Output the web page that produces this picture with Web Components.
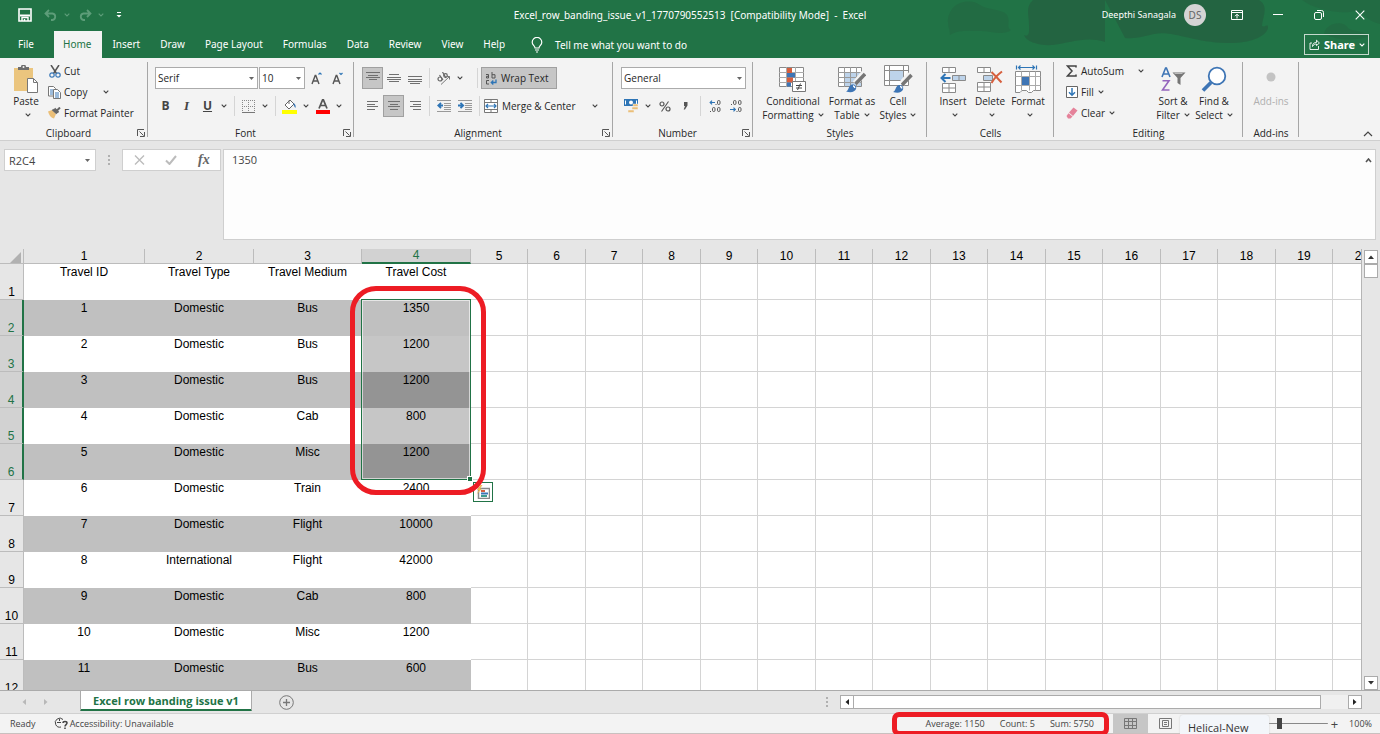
<!DOCTYPE html>
<html lang="en">
<head>
<meta charset="utf-8">
<title>Excel_row_banding_issue_v1_1770790552513 - Excel</title>
<style>
  body {
    margin: 0;
    font-family: "Open Sans", "Noto Sans", sans-serif;
    font-size: 10px;
    line-height: 14px;
    color: #262626;
  }
</style>
</head>
<body>
<excel-app></excel-app>

<script>
// Icon drawings: [width, height, svg content].
const ICONS = {
  save: [14, 14, '<path d="M1 1h12v12H1z" fill="none" stroke="#fff" stroke-width="1.6"/><path d="M2 7.500h10" stroke="#fff" stroke-width="2"/><path d="M4 13v-3.500h6V13M6.500 13v-2" fill="none" stroke="#fff" stroke-width="1.400"/>'],
  undo: [14, 12, '<path d="M5 1L1.500 4.500 5 8M2 4.500h6.500a3.300 3.300 0 0 1 0 6.500H7" fill="none" stroke="#5d9d79" stroke-width="1.800"/>'],
  redo: [14, 12, '<path d="M9 1l3.500 3.500L9 8M12 4.500H5.500a3.300 3.300 0 0 0 0 6.500H7" fill="none" stroke="#5d9d79" stroke-width="1.800"/>'],
  customize: [6, 6, '<path d="M1 .5h4" stroke="#fff"/><path d="M.5 3h5L3 5.500z" fill="#fff"/>'],
  chevron: [6, 4, '<path d="M.7.700L3 3 5.300.7" fill="none" stroke="currentColor" stroke-width="1.100"/>'],
  collapse: [10, 6, '<path d="M1 5l4-4 4 4" fill="none" stroke="#444" stroke-width="1.200"/>'],
  bulb: [12, 16, '<path d="M4 11c0-2-2.800-2.800-2.800-5.800a4.800 4.800 0 0 1 9.600 0C10.800 8.200 8 9 8 11zM4 13h4M5 15h2" fill="none" stroke="#fff" stroke-width="1.200"/>'],
  ribbonbox: [12, 10, '<path d="M.5.500h11v9H.5zM.5 2.500h11M6 8.500v-4M4 6.200l2-2 2 2" fill="none" stroke="#fff"/>'],
  minimize: [10, 2, '<path d="M0 .5h10" stroke="#fff"/>'],
  restore: [10, 10, '<rect x=".5" y="2.500" width="7" height="7" rx="1.500" fill="none" stroke="#fff"/><path d="M3 .5h4.500a2 2 0 0 1 2 2V7" fill="none" stroke="#fff"/>'],
  close: [10, 10, '<path d="M.7.700l8.600 8.600M9.300.7L.7 9.300" stroke="#fff" stroke-width="1.100"/>'],
  share: [11, 11, '<path d="M3 4H1v6.500h8.500V7M3.500 7.500c0-3 1.500-4 4-4V1.200L10.400 4 7.500 6.600V5C6 5 4.500 5.500 3.500 7.500z" fill="none" stroke="#fff" stroke-width=".9"/>'],
  paste: [25, 28, '<path d="M0 3h19v23H0z" fill="#ebc57e"/><path d="M4 5V2h3a2.500 2.500 0 0 1 5 0h3v3z" fill="#6d6d6d"/><circle cx="9.500" cy="2" r="1" fill="#f3f3f3"/><path d="M13.500 13.500h6l4 4v10h-10z" fill="#fff" stroke="#777"/><path d="M19.500 13.500v4h4" fill="none" stroke="#777"/>'],
  cut: [12, 13, '<path d="M2 0l5.500 8.500M10 0L4.500 8.500" stroke="#555" stroke-width="1.500"/><circle cx="3" cy="10" r="2.200" fill="none" stroke="#3a78b8" stroke-width="1.200"/><circle cx="9" cy="10" r="2.200" fill="none" stroke="#3a78b8" stroke-width="1.200"/>'],
  copy: [13, 13, '<path d="M.5.500h5l2 2v7.500h-7z" fill="#fff" stroke="#777"/><path d="M2 4h3M2 6h3M2 8h3" stroke="#3a78b8"/><path d="M5.500 3.500h4l3 3v6h-7z" fill="#fff" stroke="#777"/><path d="M7 7h4M7 9h4M7 11h4" stroke="#3a78b8"/>'],
  painter: [13, 12, '<path d="M0 4.500l4-1.500 4 4-2 4.500C3 11 1 8 0 4.500z" fill="#ebbf78"/><path d="M4.500 2.500l4.500 4M6.500 1.500l4 4M8 4.500L12 .5" stroke="#666" stroke-width="2"/>'],
  grow: [11, 13, '<path d="M1 12l3.200-8.500h.6L8 12M2.200 9h4.600" fill="none" stroke="#555" stroke-width="1.400"/><path d="M7.500 2.500L9 1l1.500 1.500" fill="none" stroke="#2e75b6" stroke-width="1.200"/>'],
  shrink: [11, 13, '<path d="M1 12l3.200-8.500h.6L8 12M2.200 9h4.600" fill="none" stroke="#555" stroke-width="1.400"/><path d="M7.500 1L9 2.500 10.500 1" fill="none" stroke="#2e75b6" stroke-width="1.200"/>'],
  borders: [13, 13, '<path d="M0 .5h13M.5 0v12M12.500 0v12M6.500 0v12M0 6.500h13" stroke="#888" stroke-dasharray="1 1"/><path d="M0 12.500h13" stroke="#777"/>'],
  bucket: [15, 15, '<path d="M3 6l5-5 4 4-5 5z" fill="#fff" stroke="#666"/><path d="M7 5V1.500" stroke="#666"/><path d="M11.500 4c2 1 2.500 3 2 5-1-1-1.500-2-2-3.500z" fill="#3a78b8"/><path d="M0 11h15v4H0z" fill="#ff0"/>'],
  fontcolor: [14, 15, '<path d="M3 9.500L6.600.8h.8L11 9.500M4.300 6.500h5.400" fill="none" stroke="#555" stroke-width="1.700"/><path d="M0 11h14v4H0z" fill="#f00"/>'],
  aligntop: [14, 14, '<path d="M0 1.500h14M2 4.500h10M0 6.500h14M3 8.500h8" stroke="#707070"/>'],
  alignmid: [14, 12, '<path d="M2 2.500h10M0 5.500h14M0 7.500h14M2 9.500h10" stroke="#707070"/>'],
  alignbot: [14, 12, '<path d="M0 4.500h14M0 7.500h14M0 9.500h14M2 11.500h10" stroke="#707070"/>'],
  left: [12, 12, '<path d="M0 1.500h11M0 4.500h8M0 6.500h11M0 9.500h8" stroke="#707070"/>'],
  center: [12, 12, '<path d="M0 1.500h12M2 4.500h8M0 6.500h12M2 9.500h8" stroke="#707070"/>'],
  right: [12, 12, '<path d="M1 1.500h11M4 4.500h8M1 6.500h11M4 9.500h8" stroke="#707070"/>'],
  orient: [14, 13, '<circle cx="3" cy="7" r="2" fill="none" stroke="#666" stroke-width="1.200"/><path d="M2.500 3l3.500 5M5.500 0L9 6" stroke="#666" stroke-width="1.200"/><circle cx="8.500" cy="3.500" r="1.800" fill="none" stroke="#666" stroke-width="1.200"/><path d="M4 12.500L12.500 4.500M9.500 4.500h3v3" fill="none" stroke="#777"/>'],
  outdent: [14, 12, '<path d="M0 .5h14M7 3.500h7M7 5.500h7M7 7.500h7M0 11.500h14M7 9.500h7" stroke="#999"/><path d="M6 5.500H1.500M4 2.800L1.200 5.500 4 8.200" fill="none" stroke="#2e75b6" stroke-width="1.800"/>'],
  indent: [14, 12, '<path d="M0 .5h14M7 3.500h7M7 5.500h7M7 7.500h7M0 11.500h14M7 9.500h7" stroke="#999"/><path d="M0 5.500h4.500M2.500 2.800L5.200 5.500 2.500 8.200" fill="none" stroke="#2e75b6" stroke-width="1.800"/>'],
  wrap: [12, 13, '<path d="M1 2.500h2.500V6H1.500V4.300h2M7 0v6h3V2.700H7M4 8.500H1.500V12H4" fill="none" stroke="#555"/><path d="M11 7.500v3H6.500M8.300 8.500l-2 2 2 2" fill="none" stroke="#2e75b6" stroke-width="1.300"/>'],
  merge: [14, 14, '<path d="M.5.500h13v13H.5zM7 .5v3M7 10.500v3M.5 3.500h13M.5 10.500h13" fill="#fff" stroke="#777"/><path d="M2 7h10M4 5L2 7l2 2M10 5l2 2-2 2" fill="none" stroke="#2e75b6" stroke-width="1.200"/>'],
  money: [15, 14, '<path d="M0 0h14v7H0z" fill="#2e75b6"/><circle cx="7" cy="3.500" r="2" fill="#fff"/><path d="M1.500 1.500v4M12.500 1.500v4" stroke="#fff"/><path d="M9 5h5v2.500H9zM8 8h6v2.500H8zM4 11h6v2.500H4z" fill="#ebbf78" stroke="#f3f3f3" stroke-width=".5"/>'],
  percent: [12, 11, '<circle cx="3" cy="3" r="2" fill="none" stroke="#555" stroke-width="1.200"/><circle cx="9" cy="8" r="2" fill="none" stroke="#555" stroke-width="1.200"/><path d="M9.500.5l-7 10" stroke="#555" stroke-width="1.100"/>'],
  comma: [5, 8, '<path d="M1 0h3.500v3.500L2 7.500H.7L2 4H1z" fill="#555"/>'],
  incdec: [12, 13, '<path d="M6 2.500H1.500M3 .7L1.200 2.500 3 4.300" fill="none" stroke="#2e75b6" stroke-width="1.200"/><rect x="8.500" y=".5" width="2.500" height="4" rx="1.200" fill="none" stroke="#555"/><rect x="3.500" y="7.500" width="2.500" height="4" rx="1.200" fill="none" stroke="#555"/><rect x="8.500" y="7.500" width="2.500" height="4" rx="1.200" fill="none" stroke="#555"/><path d="M1 11h1v1H1zM6.500 4h1v1h-1z" fill="#555"/>'],
  decdec: [12, 13, '<path d="M0 9.500h5M3.500 7.700l1.800 1.800-1.800 1.800" fill="none" stroke="#2e75b6" stroke-width="1.200"/><rect x="3.500" y=".5" width="2.500" height="4" rx="1.200" fill="none" stroke="#555"/><rect x="8.500" y=".5" width="2.500" height="4" rx="1.200" fill="none" stroke="#555"/><rect x="8.500" y="7.500" width="2.500" height="4" rx="1.200" fill="none" stroke="#555"/><path d="M1 4h1v1H1zM6.500 11h1v1h-1z" fill="#555"/>'],
  condfmt: [28, 27, '<path d="M.5 1.500h24v19H.5z" fill="#fff" stroke="#8a8a8a"/><path d="M0 6.500h25M0 11.500h25M0 16.500h25M7.500 1v20M16.500 1v20" stroke="#aaa"/><path d="M8 2h5v5H8z" fill="#d65f3e"/><path d="M8 7h8v4.500H8z" fill="#3e75b5"/><path d="M8 11.500h6v5H8z" fill="#d65f3e"/><path d="M8 16.500h4v4H8z" fill="#3e75b5"/><path d="M13.500 15.500h13v10h-13z" fill="#fff" stroke="#777"/><path d="M17 19.500h6M17 22h6M21.500 17.500l-3 6.500" stroke="#444"/>'],
  fmttable: [28, 27, '<path d="M.5 1.500h23v19H.5z" fill="#fff" stroke="#8a8a8a"/><path d="M7 7h16v13H7z" fill="#bdd3ea"/><path d="M0 6.500h24M0 11.500h24M0 16.500h24M6.500 1v20M12.500 1v20M18.500 1v20" stroke="#9a9a9a"/><path d="M26 7L17 17.500" stroke="#f3f3f3" stroke-width="6"/><path d="M27 8l-9.500 10" stroke="#757575" stroke-width="3.500"/><path d="M8 25.500c3-.5 2-6 6-7 3-.5 5 2 4 4.500-1 3-5 4-10 2.500z" fill="#3e75b5"/><path d="M15 20c1 0 2 1 1.500 2" fill="none" stroke="#fff" stroke-width="1.500"/>'],
  cellstyle: [29, 29, '<path d="M.5.500h24v20H.5zM.5 5.500h24M.5 15.500h24M5.500.5v20M19.500.5v20" fill="#fff" stroke="#8a8a8a"/><path d="M6 6h13v9H6z" fill="#bdd3ea"/><path d="M26 9L18 18.500" stroke="#f3f3f3" stroke-width="6"/><path d="M27.500 10l-9.500 10" stroke="#757575" stroke-width="3.500"/><path d="M9 27c3-.5 2-6 6-7 3-.5 5 2 4 4.500-1 3-5 4-10 2.500z" fill="#3e75b5"/><path d="M16 21.500c1 0 2 1 1.500 2" fill="none" stroke="#fff" stroke-width="1.500"/>'],
  insert: [26, 27, '<path d="M2.500 1.500h13v5h-13zM9 1.500v5M2.500 17.500h13v9h-13zM9 17.500v9M2.500 22h13" fill="#fff" stroke="#8a8a8a"/><path d="M12.500 9.500h13v5h-13zM19 9.500v5" fill="#bdd3ea" stroke="#8a8a8a"/><path d="M10.500 12H1.500M5.500 8L1.500 12l4 4" fill="none" stroke="#2e75b6" stroke-width="2"/>'],
  delete: [26, 27, '<path d="M.5 1.500h13v5H.5zM7 1.500v5M.5 16.500h13v9H.5zM7 16.500v9M.5 21h13" fill="#fff" stroke="#8a8a8a"/><path d="M6.500 9.500h9v5h-9z" fill="#bdd3ea" stroke="#8a8a8a"/><path d="M14.500 6c3 3 6 6 10 10.500M25 5.500c-4 3-8 7-10.500 11.500" fill="none" stroke="#d65f3e" stroke-width="2"/>'],
  format: [26, 28, '<path d="M1.500.5v4M21.500.5v4M3 2.500h17M5.500.5l-2 2 2 2M17.500.5l2 2-2 2" fill="none" stroke="#2e75b6" stroke-width="1.200"/><path d="M.5 6.500h25v19h-7l-2 2h-3l-2-2H7l-2 2H.5z" fill="#fff" stroke="#8a8a8a"/><path d="M.5 11.500h25M.5 20.500h25M6.500 6.500v19M14.500 6.500v19M20.500 6.500v19" stroke="#aaa"/><path d="M7 12h7v8H7z" fill="#3e75b5"/>'],
  sum: [11, 12, '<path d="M10 2.500V1H1.500l4.500 5-4.500 5H10V9.500" fill="none" stroke="#444" stroke-width="1.500"/>'],
  fill: [12, 12, '<path d="M.5.500h11v11H.5z" fill="#fff" stroke="#666"/><path d="M6 2v7M3 6.200L6 9.200l3-3" fill="none" stroke="#2e75b6" stroke-width="1.500"/>'],
  clear: [12, 12, '<path d="M7.500.5L11.500 3.500 7 9 3 5.500z" fill="#e5829a"/><path d="M2.500 6.200l4 3.300L4.500 11.500H2L.5 9z" fill="#e5829a"/>'],
  sort: [25, 25, '<path d="M1 10L4.600 1h.8L9 10M2.200 7h5.600" fill="none" stroke="#3e75b5" stroke-width="1.600"/><path d="M1.500 13.800H8L1.500 23h7" fill="none" stroke="#9465bd" stroke-width="1.600"/><path d="M11.500 5.500h13L19.500 11v7l-3-2v-5z" fill="#757575"/><path d="M13.500 6.500h8" stroke="#bbb"/>'],
  find: [26, 27, '<circle cx="16" cy="10" r="8.300" fill="#fff" stroke="#3e75b5" stroke-width="1.800"/><path d="M10 16.500l-8 8" stroke="#3e75b5" stroke-width="3.800"/>'],
  dot: [12, 16, '<circle cx="6" cy="6" r="4.500" fill="#c3c3c3"/>'],
  launcher: [8, 8, '<path d="M.5 7V.5H7M2.500 2.500l4 4M7.500 3v4.500H3" fill="none" stroke="#555"/>'],
  cancel: [11, 10, '<path d="M1 .5l9 9M10 .5l-9 9" stroke="#bcbcbc" stroke-width="1.400"/>'],
  enter: [12, 10, '<path d="M1 5.500L4.500 9 11 1" fill="none" stroke="#bcbcbc" stroke-width="2"/>'],
  dots: [2, 10, '<path d="M0 0h2v2H0zM0 4h2v2H0zM0 8h2v2H0z" fill="#b0b0b0"/>'],
  drop: [5, 3, '<path d="M0 0h5L2.500 3z" fill="#666"/>'],
  shrinkbar: [7, 5, '<path d="M1 4l2.500-3L6 4" fill="none" stroke="#555" stroke-width="1.600"/>'],
  up: [6, 4, '<path d="M0 4h6L3 .5z" fill="#333"/>'],
  down: [6, 4, '<path d="M0 0h6L3 3.500z" fill="#333"/>'],
  prev: [4, 6, '<path d="M4 0v6L.5 3z" fill="currentColor"/>'],
  next: [4, 6, '<path d="M0 0v6l3.500-3z" fill="currentColor"/>'],
  corner: [11, 11, '<path d="M11 0v11H0z" fill="#b1b1b1"/>'],
  add: [15, 15, '<circle cx="7.500" cy="7.500" r="6.800" fill="none" stroke="#777"/><path d="M7.500 4v7M4 7.500h7" stroke="#777" stroke-width="1.300"/>'],
  access: [14, 13, '<path d="M9 2.500A4.500 4.500 0 1 0 7 10M3 5.500h4M5.500 2v2" fill="none" stroke="#444"/><path d="M9 6c0-2 4-2 4 0 0 1.600-2 1.600-2 3.500M11 10.500V12" fill="none" stroke="#444" stroke-width="1.500"/>'],
  normal: [13, 11, '<path d="M.5.500h12v10H.5zM4.500.5v10M8.500.5v10M.5 3.500h12M.5 7.500h12" fill="none" stroke="#777"/>'],
  pagelayout: [13, 11, '<path d="M.5.500h12v10H.5zM3.500 2.500h6v6h-6zM5 4.500h3M5 6.500h3" fill="none" stroke="#777"/>'],
  analysis: [14, 14, '<path d="M2.500 3.500h11v10h-11z" fill="#fff" stroke="#888" stroke-width="1.500"/><path d="M5 5h4v2H5z" fill="#d65f3e"/><path d="M5 7.500h7v2H5z" fill="#3e75b5"/><path d="M5 10h6v2H5z" fill="#3f9c8f"/><path d="M4.500 0L1 5h2L.5 9.500 6 3.800H4L6.500 0z" fill="#f1b955"/>']
}

/**
 * Attaches an open shadow root with the given markup.
 *
 * @param {HTMLElement} host - The host element.
 * @param {string} html - The markup and styles.
 */
function render (host, html) {
  const template = document.createElement('template')
  template.innerHTML = html
  host.attachShadow({ mode: 'open' }).appendChild(template.content.cloneNode(true))
}

customElements.define('app-icon', class extends HTMLElement {
  connectedCallback () {
    if (this.shadowRoot) return
    const [w, h, body] = ICONS[this.getAttribute('name')]
    render(this, `
      <style>:host { display: inline-flex; flex: none; } svg { display: block; }</style>
      <svg width="${w}" height="${h}" viewBox="0 0 ${w} ${h}" aria-hidden="true">${body}</svg>`)
  }
})

/**
 * A ribbon button. Attributes: icon, label, name (accessible name),
 * caret, and the flags large, low, square, arrow, on and off.
 */
customElements.define('tool-button', class extends HTMLElement {
  connectedCallback () {
    if (this.shadowRoot) return
    const icon = this.getAttribute('icon')
    const label = this.getAttribute('label') || ''
    const caret = this.getAttribute('caret')
    const lines = label.split('|')
    const chevron = '<app-icon class="caret" name="chevron"></app-icon>'
    const text = lines.map((line, i) =>
      `<span>${line}${caret === 'inline' && i === lines.length - 1 ? chevron : ''}</span>`).join('')
    render(this, `
      <style>
        :host { display: inline-flex; flex: none; width: var(--w, auto); }
        button {
          flex: 1; display: flex; align-items: center; gap: 4px;
          height: 22px; padding: 0; border: 1px solid transparent;
          background: none; font: inherit; color: inherit; white-space: nowrap;
        }
        .pic { display: flex; align-items: center; justify-content: center; min-width: 13px; }
        .text { display: flex; flex-direction: column; }
        .caret { color: #444; }
        span .caret { margin-left: 4px; vertical-align: 2px; }
        :host([square]) { width: 21px; }
        :host([arrow]) { width: 12px; }
        :host([arrow]) button { color: #444; }
        :host([arrow]) .pic { min-width: 6px; }
        :host([square]) button, :host([arrow]) button { justify-content: center; }
        :host([low]) button { height: 20px; gap: 3px; border-width: 1px 0; }
        :host([on]) button { background: #c6c6c6; border-color: #a0a0a0; }
        :host([off]) button { color: #b0b0b0; }
        :host([large]) button { flex-direction: column; height: auto; gap: 0; border: 0; }
        :host([large]) .pic { height: 30px; }
        :host([large]) .text { text-align: center; }
        :host([large]) .below { height: 14px; display: flex; align-items: center; }
        :host([on]:not([square])) button { padding-left: 2px; }
      </style>
      <button type="button" aria-label="${this.getAttribute('name') || lines.join(' ')}">
        ${icon ? `<span class="pic"><app-icon name="${icon}"></app-icon></span>` : '<slot></slot>'}
        ${label ? `<span class="text">${text}</span>` : ''}
        ${caret === 'below' ? `<span class="below">${chevron}</span>` : ''}
      </button>`)
  }
})

/** A drop-down box with a small arrow. */
customElements.define('tool-select', class extends HTMLElement {
  connectedCallback () {
    if (this.shadowRoot) return
    render(this, `
      <style>
        :host { display: grid; align-items: center; }
        select, app-icon { grid-area: 1 / 1; }
        select {
          appearance: none; width: 100%; height: 22px; padding: 0 2px;
          border: 1px solid #ababab; border-radius: 0; background: #fff;
          font: inherit; color: #262626;
        }
        app-icon { justify-self: end; margin-right: 4px; pointer-events: none; }
      </style>
      <select aria-label="${this.getAttribute('name')}"><option>${this.getAttribute('value')}</option></select>
      <app-icon name="drop"></app-icon>`)
  }
})

customElements.define('ribbon-group', class extends HTMLElement {
  connectedCallback () {
    if (this.shadowRoot) return
    render(this, `
      <style>
        :host { display: flex; flex-direction: column; flex: none; box-sizing: border-box; position: relative; padding-top: 3px; }
        :host::after { content: ""; position: absolute; right: 0; top: 4px; bottom: 3px; border-right: 1px solid #a6a6a6; }
        .content { flex: 1; display: flex; }
        footer { display: flex; align-items: center; height: 14px; }
        footer span { flex: 1; text-align: center; }
        button { padding: 0; border: 0; background: none; margin-right: 3px; display: flex; }
      </style>
      <div class="content"><slot></slot></div>
      <footer>
        <span>${this.getAttribute('label')}</span>
        ${this.hasAttribute('launcher') ? `<button type="button" aria-label="${this.getAttribute('label')} settings"><app-icon name="launcher"></app-icon></button>` : ''}
      </footer>`)
  }
})

customElements.define('app-header', class extends HTMLElement {
  constructor () {
    super()
    const tabs = ['File', 'Home', 'Insert', 'Draw', 'Page Layout', 'Formulas', 'Data', 'Review', 'View', 'Help']
    render(this, `
      <style>
        :host { display: block; position: relative; background: #217346; color: #fff; font-family: "Noto Sans", "Open Sans", sans-serif; }
        .art { position: absolute; right: 0; top: 0; }
        .title, nav { position: relative; display: flex; align-items: center; }
        .title { display: grid; grid-template-columns: minmax(0, 1fr) auto minmax(0, 1fr); height: 30px; }
        nav { height: 28px; align-items: flex-end; }
        button { background: none; border: 0; padding: 0; font: inherit; color: inherit; display: flex; align-items: center; }
        .quick, .window { display: flex; align-items: center; }
        .quick { padding-left: 18px; }
        .quick button { color: #5d9d79; }
        .quick .save { margin-right: 12px; }
        .quick .step { gap: 6px; margin-right: 8px; }
        .quick .more { margin-left: 4px; }
        h1 { margin: 0; font: inherit; white-space: pre; }
        .window { justify-content: flex-end; }
        .user { gap: 8px; font-size: 9px; }
        .user i { font-style: normal; width: 22px; line-height: 22px; border-radius: 50%; background: #d4d4d4; color: #666; text-align: center; font-size: 10px; }
        .window .sys { width: 41px; justify-content: center; }
        .window .user { margin-right: 10px; }
        nav a { color: inherit; text-decoration: none; line-height: 27px; padding: 0 10px; white-space: nowrap; }
        nav a:first-child { padding: 0 20px 0 18px; }
        nav a.on { background: #f3f3f3; color: #217346; padding: 0 11px 0 9px; }
        .tell { gap: 12px; margin-left: 16px; flex: 1; height: 27px; }
        .share { border: 1px solid #c5d9cd; height: 21px; padding: 0 3px 0 4px; gap: 4px; font-weight: 700; font-size: 11px; margin: 0 11px 3px 0; }
      </style>
      <svg class="art" width="480" height="58" viewBox="0 0 480 58" aria-hidden="true">
        <g fill="#246340">
          <path d="M50 35c0-8-6-14 2-26 6-8 20-10 28-4 10 6 26 4 28 12 2 7-2 10 3 13-8 6-20 1-30 1s-22-2-31 4z" opacity=".5"/>
          <path d="M124 35c6 3 5-5 5-10 0-10-4-18 4-25h72v42c-20-6-34 1-52 3-13 1-27-3-29-10z" opacity=".9"/>
          <path d="M205 0h154c10 6 4 16 3 26 4 2 6-4 6 2-2 10-22 16-42 15-34-1-54-13-72-9-10 2-16 5-29 4z" opacity=".9"/>
          <path d="M424 34c2-12 20-14 24-6 4 4 16 2 22 8-12 4-30 6-46-2zM402 0h78v24c-16-4-14-12-26-13-14 4-40-2-52-11z" opacity=".5"/>
        </g>
      </svg>
      <div class="title">
        <div class="quick">
          <button class="save" aria-label="Save"><app-icon name="save"></app-icon></button>
          <button class="step" aria-label="Undo"><app-icon name="undo"></app-icon><app-icon name="chevron"></app-icon></button>
          <button class="step" aria-label="Redo"><app-icon name="redo"></app-icon><app-icon name="chevron"></app-icon></button>
          <button class="more" aria-label="Customize toolbar"><app-icon name="customize"></app-icon></button>
        </div>
        <h1>Excel_row_banding_issue_v1_1770790552513  [Compatibility Mode]  -  Excel</h1>
        <div class="window">
          <button class="user">Deepthi Sanagala <i>DS</i></button>
          <button class="sys" aria-label="Ribbon options"><app-icon name="ribbonbox"></app-icon></button>
          <button class="sys" aria-label="Minimize"><app-icon name="minimize"></app-icon></button>
          <button class="sys" aria-label="Restore"><app-icon name="restore"></app-icon></button>
          <button class="sys" aria-label="Close"><app-icon name="close"></app-icon></button>
        </div>
      </div>
      <nav>
        ${tabs.map(t => `<a href="#${t}"${t === 'Home' ? ' class="on"' : ''}>${t}</a>`).join('')}
        <button class="tell"><app-icon name="bulb"></app-icon>Tell me what you want to do</button>
        <button class="share"><app-icon name="share"></app-icon>Share<app-icon name="chevron"></app-icon></button>
      </nav>`)
  }
})

customElements.define('app-ribbon', class extends HTMLElement {
  constructor () {
    super()
    render(this, `
      <style>
        :host { display: flex; height: 82px; background: #f3f3f3; border-bottom: 1px solid #cfcfcf; }
        .stack { display: flex; flex-direction: column; gap: 1px; align-items: flex-start; }
        .rows { display: flex; flex-direction: column; gap: 6px; padding-top: 6px; }
        .row { display: flex; align-items: center; height: 22px; }
        .stack .row { height: 20px; }
        .big { padding-top: 3px; }
        .sep { width: 1px; height: 20px; background: #d5d5d5; margin: 0 3px 0 4px; }
        .clipboard { width: 148px; }
        .clipboard .big { --w: 36px; margin-left: 8px; }
        .clipboard .stack { margin-left: 4px; }
        .clipboard .row { gap: 13px; }
        .font { width: 206px; }
        .font .rows { margin-left: 7px; }
        .family { width: 103px; }
        .size { width: 46px; margin: 0 1px; }
        .alignment { width: 259px; }
        .alignment .rows { margin-left: 8px; }
        .alignment .wide { margin-left: 11px; }
        .number { width: 140px; }
        .number .rows { margin: 0 7px 0 8px; flex: 1; }
        .styles { width: 174px; }
        .cells { width: 127px; }
        .editing { width: 189px; }
        .editing .stack { width: 82px; margin: 0 5px 0 11px; }
        .editing .stack .row { width: 100%; justify-content: space-between; }
        .addins { width: 56px; }
        b, i, u { font-size: 12px; color: #444; }
        i { font-family: "Liberation Serif", serif; font-weight: 700; font-size: 13px; }
        u { font-weight: 700; }
        .end { flex: 1; display: flex; justify-content: flex-end; align-items: flex-end; padding: 0 7px 3px 0; }
        .end button { border: 0; padding: 0; background: none; display: flex; }
      </style>
      <ribbon-group class="clipboard" label="Clipboard" launcher>
        <tool-button class="big" large icon="paste" label="Paste" caret="below"></tool-button>
        <div class="stack">
          <tool-button low icon="cut" label="Cut"></tool-button>
          <div class="row">
            <tool-button low icon="copy" label="Copy"></tool-button>
            <tool-button low arrow name="Copy options" icon="chevron"></tool-button>
          </div>
          <tool-button low icon="painter" label="Format Painter"></tool-button>
        </div>
      </ribbon-group>
      <ribbon-group class="font" label="Font" launcher>
        <div class="rows">
          <div class="row">
            <tool-select class="family" name="Font" value="Serif"></tool-select>
            <tool-select class="size" name="Font size" value="10"></tool-select>
            <tool-button square icon="grow" name="Increase font size"></tool-button>
            <tool-button square icon="shrink" name="Decrease font size"></tool-button>
          </div>
          <div class="row">
            <tool-button square name="Bold"><b>B</b></tool-button>
            <tool-button square name="Italic"><i>I</i></tool-button>
            <tool-button square name="Underline"><u>U</u></tool-button>
            <tool-button arrow icon="chevron" name="Underline options"></tool-button>
            <span class="sep"></span>
            <tool-button square icon="borders" name="Borders"></tool-button>
            <tool-button arrow icon="chevron" name="Border options"></tool-button>
            <span class="sep"></span>
            <tool-button square icon="bucket" name="Fill color"></tool-button>
            <tool-button arrow icon="chevron" name="Fill color options"></tool-button>
            <tool-button square icon="fontcolor" name="Font color"></tool-button>
            <tool-button arrow icon="chevron" name="Font color options"></tool-button>
          </div>
        </div>
      </ribbon-group>
      <ribbon-group class="alignment" label="Alignment" launcher>
        <div class="rows">
          <div class="row">
            <tool-button square on icon="aligntop" name="Top align"></tool-button>
            <tool-button square icon="alignmid" name="Middle align"></tool-button>
            <tool-button square icon="alignbot" name="Bottom align"></tool-button>
            <span class="sep"></span>
            <tool-button square icon="orient" name="Orientation"></tool-button>
            <tool-button arrow icon="chevron" name="Orientation options"></tool-button>
            <span class="sep wide"></span>
            <tool-button on icon="wrap" label="Wrap Text" style="--w: 76px"></tool-button>
          </div>
          <div class="row">
            <tool-button square icon="left" name="Align left"></tool-button>
            <tool-button square on icon="center" name="Center"></tool-button>
            <tool-button square icon="right" name="Align right"></tool-button>
            <span class="sep"></span>
            <tool-button square icon="outdent" name="Decrease indent"></tool-button>
            <tool-button square icon="indent" name="Increase indent"></tool-button>
            <span class="sep"></span>
            <tool-button icon="merge" label="Merge &amp; Center" style="--w: 106px"></tool-button>
            <tool-button arrow icon="chevron" name="Merge options"></tool-button>
          </div>
        </div>
      </ribbon-group>
      <ribbon-group class="number" label="Number" launcher>
        <div class="rows">
          <tool-select name="Number format" value="General"></tool-select>
          <div class="row">
            <tool-button square icon="money" name="Accounting format"></tool-button>
            <tool-button arrow icon="chevron" name="Currency options"></tool-button>
            <tool-button square icon="percent" name="Percent style"></tool-button>
            <tool-button square icon="comma" name="Comma style"></tool-button>
            <span class="sep"></span>
            <tool-button square icon="incdec" name="Increase decimal"></tool-button>
            <tool-button square icon="decdec" name="Decrease decimal"></tool-button>
          </div>
        </div>
      </ribbon-group>
      <ribbon-group class="styles" label="Styles">
        <tool-button class="big" large icon="condfmt" label="Conditional|Formatting" caret="inline" style="--w: 66px; margin-left: 7px"></tool-button>
        <tool-button class="big" large icon="fmttable" label="Format as|Table" caret="inline" style="--w: 52px"></tool-button>
        <tool-button class="big" large icon="cellstyle" label="Cell|Styles" caret="inline" style="--w: 40px"></tool-button>
      </ribbon-group>
      <ribbon-group class="cells" label="Cells">
        <tool-button class="big" large icon="insert" label="Insert" caret="below" style="--w: 36px; margin-left: 8px"></tool-button>
        <tool-button class="big" large icon="delete" label="Delete" caret="below" style="--w: 38px"></tool-button>
        <tool-button class="big" large icon="format" label="Format" caret="below" style="--w: 38px"></tool-button>
      </ribbon-group>
      <ribbon-group class="editing" label="Editing">
        <div class="stack">
          <div class="row">
            <tool-button low icon="sum" label="AutoSum"></tool-button>
            <tool-button low arrow icon="chevron" name="AutoSum options"></tool-button>
          </div>
          <tool-button low icon="fill" label="Fill" caret="inline"></tool-button>
          <tool-button low icon="clear" label="Clear" caret="inline"></tool-button>
        </div>
        <tool-button class="big" large icon="sort" label="Sort &amp;|Filter" caret="inline" style="--w: 42px"></tool-button>
        <tool-button class="big" large icon="find" label="Find &amp;|Select" caret="inline" style="--w: 40px"></tool-button>
      </ribbon-group>
      <ribbon-group class="addins" label="Add-ins">
        <tool-button class="big" large off icon="dot" label="Add-ins" style="--w: 56px"></tool-button>
      </ribbon-group>
      <div class="end"><button aria-label="Collapse ribbon"><app-icon name="collapse"></app-icon></button></div>`)
  }
})

customElements.define('formula-bar', class extends HTMLElement {
  constructor () {
    super()
    render(this, `
      <style>
        :host { display: flex; align-items: flex-start; padding: 8px 4px 9px; background: #e6e6e6; font-size: 11px; }
        .name { display: grid; align-items: center; width: 92px; }
        .name input, .name app-icon { grid-area: 1 / 1; }
        .name app-icon { justify-self: end; margin-right: 6px; }
        input { box-sizing: border-box; width: 100%; height: 22px; padding: 0 4px; border: 1px solid #cfcfcf; font: inherit; color: #444; }
        .grip { margin: 6px 12px 0; }
        .keys { display: flex; width: 99px; box-sizing: border-box; height: 22px; border: 1px solid #cfcfcf; background: #fff; }
        .keys button { flex: 1; display: flex; align-items: center; justify-content: center; border: 0; padding: 0; background: none; font: italic 700 14px "Liberation Serif", serif; color: #666; }
        .field { flex: 1; display: grid; margin-left: 2px; }
        .field > * { grid-area: 1 / 1; }
        textarea { height: 91px; box-sizing: border-box; resize: none; border: 1px solid #cfcfcf; padding: 3px 8px; font: inherit; color: #444; background: #fdfdfd; }
        .shrink { justify-self: end; align-self: start; border: 0; padding: 9px 4px; background: none; display: flex; }
      </style>
      <div class="name"><input aria-label="Name box" value="R2C4"><app-icon name="drop"></app-icon></div>
      <app-icon class="grip" name="dots"></app-icon>
      <div class="keys">
        <button aria-label="Cancel"><app-icon name="cancel"></app-icon></button>
        <button aria-label="Enter"><app-icon name="enter"></app-icon></button>
        <button aria-label="Insert function">fx</button>
      </div>
      <div class="field">
        <textarea aria-label="Formula">1350</textarea>
        <button class="shrink" aria-label="Collapse formula bar"><app-icon name="shrinkbar"></app-icon></button>
      </div>`)
  }
})

customElements.define('red-mark', class extends HTMLElement {
  constructor () {
    super()
    render(this, '<style>:host { position: absolute; box-sizing: border-box; border: 5px solid #ed1c24; pointer-events: none; z-index: 2; }</style>')
  }
})

const ROWS = [
  ['Travel ID', 'Travel Type', 'Travel Medium', 'Travel Cost'],
  ['1', 'Domestic', 'Bus', '1350'],
  ['2', 'Domestic', 'Bus', '1200'],
  ['3', 'Domestic', 'Bus', '1200'],
  ['4', 'Domestic', 'Cab', '800'],
  ['5', 'Domestic', 'Misc', '1200'],
  ['6', 'Domestic', 'Train', '2400'],
  ['7', 'Domestic', 'Flight', '10000'],
  ['8', 'International', 'Flight', '42000'],
  ['9', 'Domestic', 'Cab', '800'],
  ['10', 'Domestic', 'Misc', '1200'],
  ['11', 'Domestic', 'Bus', '600']
]
const COLUMNS = 20
const SELECTED = { col: 3, from: 1, to: 5 }

customElements.define('sheet-grid', class extends HTMLElement {
  constructor () {
    super()
    const widths = [24, 121, 109, 108, 109]
    for (let i = 4; i < COLUMNS; i++) widths.push(i % 2 ? 58 : 57)

    const isSelected = (r, c) => c === SELECTED.col && r >= SELECTED.from && r <= SELECTED.to
    const cell = (row, r, c) => {
      const active = isSelected(r, c) && r === SELECTED.from
      const classes = [c < 4 ? 'data' : '', isSelected(r, c) ? 'sel' : '', active ? 'active' : '']
      return `<td class="${classes.join(' ').trim()}">${row[c] || ''}${active ? this.selection() : ''}</td>`
    }
    const cols = [...Array(COLUMNS).keys()]

    render(this, `
      <style>
        :host { display: flex; flex: 1; min-height: 0; background: #e6e6e6; }
        .view { flex: 1; min-width: 0; overflow: hidden; background: #fff; border-right: 1px solid #b5b5b5; }
        table { table-layout: fixed; border-collapse: separate; border-spacing: 0; width: ${widths.reduce((a, b) => a + b)}px; font: 12px/17px "Liberation Sans", Arial, sans-serif; color: #000; }
        th, td { box-sizing: border-box; padding: 0; font-weight: 400; }
        thead th { height: 15px; line-height: 14px; vertical-align: bottom; background: #e6e6e6; border-right: 1px solid #bcbcbc; border-bottom: 1px solid #bcbcbc; }
        thead th.on { line-height: 13px; background: #d2d2d2; color: #217346; border-bottom: 2px solid #217346; }
        thead app-icon { display: flex; justify-content: flex-end; padding-right: 2px; }
        tbody th { height: 36px; vertical-align: bottom; line-height: 13px; background: #e6e6e6; border-right: 1px solid #bcbcbc; border-bottom: 1px solid #bcbcbc; }
        tbody th.on { background: #d2d2d2; color: #217346; border-right: 2px solid #217346; }
        td { height: 36px; vertical-align: top; text-align: center; border-right: 1px solid #d4d4d4; border-bottom: 1px solid #d4d4d4; }
        td.data { border-color: #fff; }
        tr.band td.data { background: #c0c0c0; border-color: #c0c0c0; }
        td.data.sel { background: #c6c6c6; border-color: #c6c6c6; }
        tr.band td.data.sel { background: #949494; border-color: #949494; }
        tr.band td.data.active { position: relative; background: #c0c0c0; border-color: #c0c0c0; }
        .range { position: absolute; left: -1px; top: -1px; width: 110px; height: 181px; box-sizing: border-box; border: 1px solid #217346; outline: 1px solid rgba(255, 255, 255, .6); outline-offset: -2px; }
        .handle { position: absolute; right: -3px; bottom: -3px; width: 4px; height: 4px; background: #217346; border: 1px solid #fff; }
        .analysis { position: absolute; right: -23px; bottom: -23px; width: 20px; height: 20px; padding: 0; border: 1px solid #217346; background: #fff; display: flex; align-items: center; justify-content: center; }
        red-mark { inset: -14px -16px -16px -12px; border-radius: 26px; }
        .scroll { width: 18px; display: flex; flex-direction: column; align-items: center; padding-top: 1px; box-sizing: border-box; }
        .scroll button { width: 14px; height: 14px; box-sizing: border-box; border: 1px solid #ababab; background: #fff; padding: 0; display: flex; align-items: center; justify-content: center; }
        .scroll .track { flex: 1; }
      </style>
      <div class="view">
        <table>
          <colgroup>${widths.map(w => `<col style="width: ${w}px">`).join('')}</colgroup>
          <thead><tr>
            <th><app-icon name="corner"></app-icon></th>
            ${cols.map(c => `<th scope="col"${c === SELECTED.col ? ' class="on"' : ''}>${c + 1}</th>`).join('')}
          </tr></thead>
          <tbody>
            ${ROWS.map((row, r) => `<tr${r % 2 ? ' class="band"' : ''}>
              <th scope="row"${isSelected(r, SELECTED.col) ? ' class="on"' : ''}>${r + 1}</th>
              ${cols.map(c => cell(row, r, c)).join('')}
            </tr>`).join('')}
          </tbody>
        </table>
      </div>
      <div class="scroll">
        <button aria-label="Scroll up"><app-icon name="up"></app-icon></button>
        <button aria-label="Scroll position"></button>
        <div class="track"></div>
        <button aria-label="Scroll down"><app-icon name="down"></app-icon></button>
      </div>`)
  }

  /**
   * Markup of the frame drawn over the selected range.
   *
   * @returns {string} The markup.
   */
  selection () {
    return `<div class="range">
      <span class="handle"></span>
      <button class="analysis" aria-label="Quick analysis"><app-icon name="analysis"></app-icon></button>
      <red-mark></red-mark>
    </div>`
  }
})

customElements.define('sheet-tabs', class extends HTMLElement {
  constructor () {
    super()
    render(this, `
      <style>
        :host { display: flex; align-items: center; height: 22px; background: #e6e6e6; border-top: 1px solid #ababab; border-bottom: 1px solid #d0d0d0; }
        button { border: 0; background: none; padding: 0; display: flex; align-items: center; justify-content: center; color: #b8b8b8; }
        .nav { display: flex; gap: 18px; margin: 0 32px 0 22px; }
        a { align-self: flex-start; padding: 0 12px; background: #fff; border: 1px solid #ababab; border-width: 0 1px; box-shadow: inset 0 -1px #217346; color: #217346; font-weight: 700; font-size: 11px; line-height: 19px; text-decoration: none; border-bottom: 1px solid #217346; }
        .add { margin-left: 27px; }
        .fill { flex: 1; }
        .bar { display: flex; width: 522px; margin: 0 18px 0 12px; }
        .bar button { width: 14px; height: 14px; box-sizing: border-box; border: 1px solid #ababab; background: #fff; color: #222; }
        .bar .thumb { width: 467px; border-left: 0; }
        .bar .track { flex: 1; background: #f0f0f0; }
      </style>
      <div class="nav">
        <button aria-label="Previous sheet"><app-icon name="prev"></app-icon></button>
        <button aria-label="Next sheet"><app-icon name="next"></app-icon></button>
      </div>
      <a href="#sheet1">Excel row banding issue v1</a>
      <button class="add" aria-label="New sheet"><app-icon name="add"></app-icon></button>
      <span class="fill"></span>
      <app-icon name="dots"></app-icon>
      <div class="bar">
        <button aria-label="Scroll left"><app-icon name="prev"></app-icon></button>
        <button class="thumb" aria-label="Scroll position"></button>
        <span class="track"></span>
        <button aria-label="Scroll right"><app-icon name="next"></app-icon></button>
      </div>`)
  }
})

customElements.define('status-bar', class extends HTMLElement {
  constructor () {
    super()
    render(this, `
      <style>
        :host { display: flex; align-items: center; position: relative; height: 19px; background: #f3f3f3; border-bottom: 1px solid #c9c0bf; font-size: 9px; color: #444; }
        button { border: 0; background: none; padding: 0; font: inherit; color: inherit; display: flex; align-items: center; justify-content: center; gap: 2px; }
        .ready { margin: 0 18px 0 10px; }
        .fill { flex: 1; }
        .stats { position: relative; display: flex; gap: 15px; margin-right: 19px; }
        red-mark { inset: -5px -15px -5px -34px; border-radius: 7px; }
        .view { width: 35px; height: 19px; }
        .view.on { background: #c6c6c6; }
        .zoom { display: flex; align-items: center; gap: 3px; box-sizing: border-box; width: 149px; padding-right: 8px; margin-left: 48px; }
        input { appearance: none; flex: 1; min-width: 0; margin: 0; height: 12px; background: linear-gradient(#888, #888) center / 100% 1px no-repeat; }
        input::-webkit-slider-thumb { appearance: none; width: 5px; height: 11px; background: #444; }
        .plus { font-size: 13px; }
        .zoom .level { margin-left: 8px; }
        .tip { position: absolute; right: 111px; top: 1px; bottom: -1px; overflow: hidden; width: 81px; padding: 7px 0 0 8px; background: #f3f6fa; border-radius: 3px 3px 0 0; box-shadow: 0 0 2px #ccc; font-size: 11px; line-height: 12px; color: #333; }
      </style>
      <span class="ready">Ready</span>
      <button><app-icon name="access"></app-icon>Accessibility: Unavailable</button>
      <span class="fill"></span>
      <div class="stats">
        <span>Average: 1150</span><span>Count: 5</span><span>Sum: 5750</span>
        <red-mark></red-mark>
      </div>
      <button class="view on" aria-label="Normal view"><app-icon name="normal"></app-icon></button>
      <button class="view" aria-label="Page layout view"><app-icon name="pagelayout"></app-icon></button>
      <div class="zoom">
        <input type="range" aria-label="Zoom" value="50">
        <button class="plus" aria-label="Zoom in">+</button>
        <button class="level">100%</button>
      </div>
      <div class="tip">Helical-New</div>`)
  }
})

customElements.define('excel-app', class extends HTMLElement {
  constructor () {
    super()
    render(this, `
      <style>
        :host { display: flex; flex-direction: column; height: 100vh; overflow: hidden; }
        app-header, app-ribbon, formula-bar, sheet-tabs, status-bar { flex: none; }
      </style>
      <app-header></app-header>
      <app-ribbon></app-ribbon>
      <formula-bar></formula-bar>
      <sheet-grid></sheet-grid>
      <sheet-tabs></sheet-tabs>
      <status-bar></status-bar>`)
  }
})
</script>
</body>
</html>
